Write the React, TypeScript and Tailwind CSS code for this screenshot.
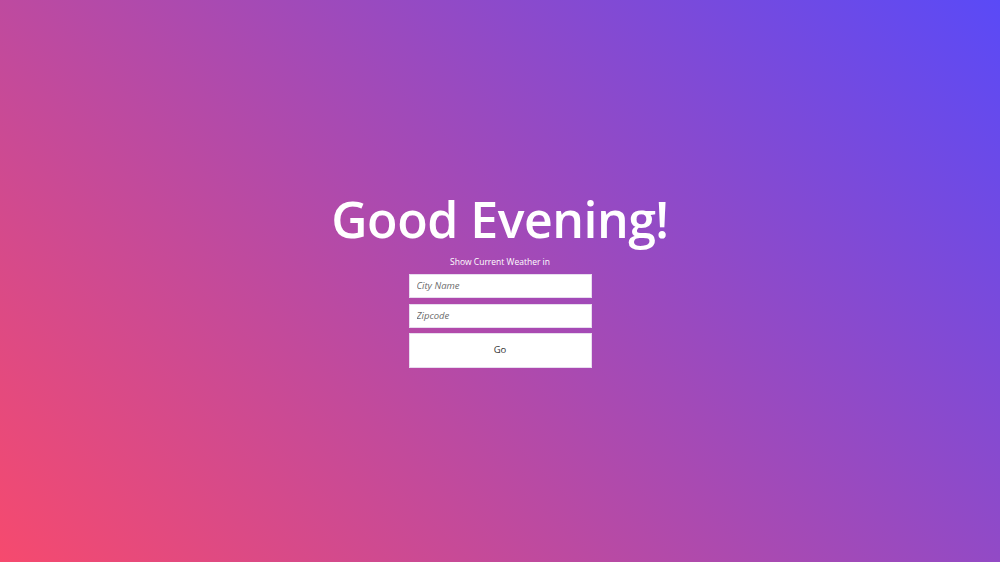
import React from 'react';

export default function App() {
  return (
    <div
      className="w-full h-[562px] flex flex-col items-center justify-center bg-[linear-gradient(45deg,#f64a6e,#5a4af7)] text-white"
      style={{ fontFamily: '"Open Sans", sans-serif' }}
    >
      <h1 className="text-[50px] leading-[56px] font-semibold tracking-[-0.5px]">Good Evening!</h1>
      <p className="text-[8.5px] leading-[12px] mt-[9px] mb-[6px]">Show Current Weather in</p>
      <div className="w-[183px] flex flex-col gap-[6px] mb-[4px]">
        <input
          className="h-[24px] bg-white border border-[#e8dcef] px-[7px] text-[9.5px] italic text-[#333] placeholder:text-[#6b6b6b] outline-none"
          placeholder="City Name"
        />
        <input
          className="h-[24px] bg-white border border-[#e8dcef] px-[7px] text-[9.5px] italic text-[#333] placeholder:text-[#6b6b6b] outline-none"
          placeholder="Zipcode"
        />
        <button className="h-[35px] -mt-[1px] bg-white border border-[#e8dcef] text-[9.5px] font-medium text-[#333]">Go</button>
      </div>
    </div>
  );
}
